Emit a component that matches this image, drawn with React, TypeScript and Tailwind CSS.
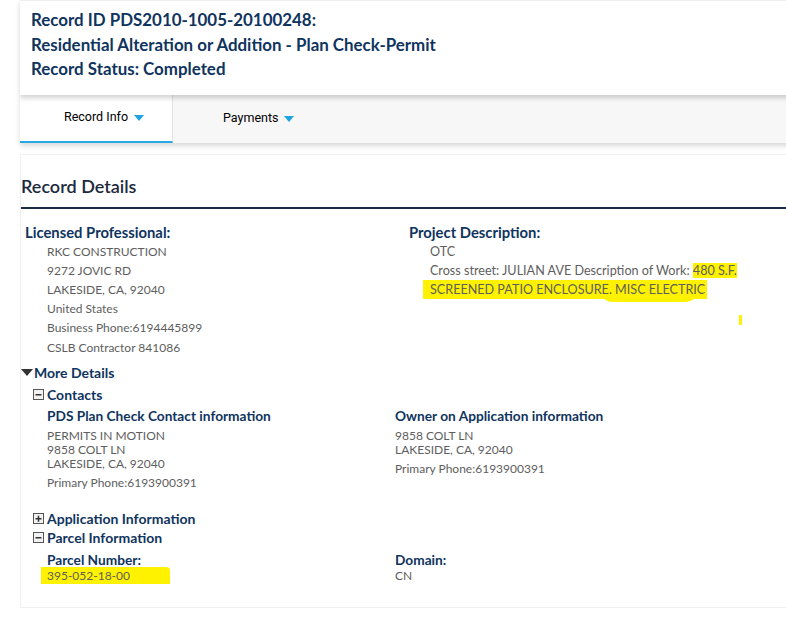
import React from 'react';

const navy = 'text-[#0f345e]';

function Caret() {
  return (
    <svg width="10" height="6" viewBox="0 0 10 6" className="inline-block ml-1.5">
      <path d="M0 0 H10 L5 6 Z" fill="#1fa3e3" />
    </svg>
  );
}

function BoxIcon({ plus }: { plus?: boolean }) {
  return (
    <svg width="11" height="11" viewBox="0 0 11 11" className="mr-[3px] shrink-0">
      <rect x="0.5" y="0.5" width="10" height="10" fill="#f2f2f2" stroke="#555" />
      <rect x="2.5" y="5" width="6" height="1.5" fill="#333" />
      {plus && <rect x="4.75" y="2.75" width="1.5" height="6" fill="#333" />}
    </svg>
  );
}

function Mark({ children }: { children: React.ReactNode }) {
  return <span className="bg-[#fff200]">{children}</span>;
}

export default function App() {
  return (
    <div className="w-[786px] h-[635px] overflow-hidden bg-white font-['Lato','Open_Sans',sans-serif]">
      <div className="pl-5 w-[806px]">
        {/* header */}
        <div className="bg-white border-t border-[#eee] shadow-[0_3px_5px_rgba(0,0,0,0.18)] relative z-10 pt-[7px] pb-[13px] pl-[11px]">
          <div className={`${navy} text-[16.9px] font-bold leading-[24.5px]`}>
            <div>Record ID PDS2010-1005-20100248:</div>
            <div>Residential Alteration or Addition - Plan Check-Permit</div>
            <div>Record Status: Completed</div>
          </div>
        </div>

        {/* tabs */}
        <div className="flex h-[48px] bg-[#f7f7f7] shadow-[0_3px_5px_rgba(0,0,0,0.15)]">
          <div className="w-[153px] bg-white border-b-2 border-[#29a8e6] border-r border-r-[#e2e2e2] flex items-center pl-[44px] text-[12.5px] text-black font-['Roboto',sans-serif]">
            Record Info
            <Caret />
          </div>
          <div className="pl-[50px] flex items-center text-[12.5px] text-black font-['Roboto',sans-serif]">
            Payments
            <Caret />
          </div>
        </div>

        {/* content card */}
        <div className="mt-[11px] border border-[#f0f0f0] h-[454px]">
          <h2 className="text-[18px] font-semibold text-[#1c2a3e] pt-[19px] pb-[9px] leading-[24px]">Record Details</h2>
          <div className="h-[2px] bg-[#1d2c45]" />

          <div className="grid grid-cols-[384px_1fr] pl-[4px] pt-[14px]">
            <div>
              <div className={`${navy} text-[14.8px] font-bold leading-[18px]`}>Licensed Professional:</div>
              <div className="pl-[22px] text-[12px] text-[#5e5e5e] leading-[19.2px] pt-[1px]">
                <div>RKC CONSTRUCTION</div>
                <div>9272 JOVIC RD</div>
                <div>LAKESIDE, CA, 92040</div>
                <div>United States</div>
                <div>Business Phone:6194445899</div>
                <div>CSLB Contractor 841086</div>
              </div>
            </div>
            <div className="relative">
              <div className={`${navy} text-[14.8px] font-bold leading-[18px]`}>Project Description:</div>
              <div className="pl-[21px] text-[12.6px] text-[#5e5e5e] leading-[19.2px] pt-[1px] pr-[30px]">
                <div>OTC</div>
                <div>
                  Cross street: JULIAN AVE Description of Work: <Mark>480 S.F.</Mark>
                </div>
                <div className="relative -ml-[7px] inline-block isolate">
                  <span className="absolute left-[176px] top-[5px] w-[100px] h-[17px] bg-[#fff200] rounded-b-[14px] -z-10" />
                  <span className="bg-[#fff200] pl-[7px] pr-[2px] py-[2px]">SCREENED PATIO ENCLOSURE. MISC ELECTRIC</span>
                </div>
              </div>
              <span className="absolute left-[330px] top-[92px] w-[3px] h-[10px] bg-[#fff200]" />
            </div>
          </div>

          {/* more details */}
          <div className="pt-[7px]">
            <div className={`flex items-center ${navy} text-[14px] font-bold leading-[18px]`}>
              <svg width="12" height="8" viewBox="0 0 12 8" className="mr-[1px]">
                <path d="M0 0 H12 L6 7 Z" fill="#333" />
              </svg>
              More Details
            </div>
            <div className="pl-[12px] pt-[4px]">
              <div className={`flex items-center ${navy} text-[14px] font-bold leading-[18px]`}>
                <BoxIcon />
                Contacts
              </div>
              <div className="grid grid-cols-[348px_1fr] pl-[14px] pt-[3px]">
                <div>
                  <div className={`${navy} text-[13.7px] font-bold leading-[17px]`}>PDS Plan Check Contact information</div>
                  <div className="text-[12px] text-[#5e5e5e] leading-[14px] pt-[5px]">
                    <div>PERMITS IN MOTION</div>
                    <div>9858 COLT LN</div>
                    <div>LAKESIDE, CA, 92040</div>
                    <div className="pt-[5px]">Primary Phone:6193900391</div>
                  </div>
                </div>
                <div>
                  <div className={`${navy} text-[13.7px] font-bold leading-[17px]`}>Owner on Application information</div>
                  <div className="text-[12px] text-[#5e5e5e] leading-[14px] pt-[5px]">
                    <div>9858 COLT LN</div>
                    <div>LAKESIDE, CA, 92040</div>
                    <div className="pt-[5px]">Primary Phone:6193900391</div>
                  </div>
                </div>
              </div>

              <div className={`flex items-center ${navy} text-[14px] font-bold leading-[18px] mt-[20px]`}>
                <BoxIcon plus />
                Application Information
              </div>
              <div className={`flex items-center ${navy} text-[14px] font-bold leading-[18px] mt-[1px]`}>
                <BoxIcon />
                Parcel Information
              </div>
              <div className="grid grid-cols-[348px_1fr] pl-[14px] pt-[4px]">
                <div>
                  <div className={`${navy} text-[13.7px] font-bold leading-[17px]`}>Parcel Number:</div>
                  <div className="text-[12px] text-[#5e5e5e] leading-[16px]">
                    <span className="bg-[#fff200] -ml-[6px] pl-[6px] pr-[40px] py-[1px] rounded-tr-[4px]">395-052-18-00</span>
                  </div>
                </div>
                <div>
                  <div className={`${navy} text-[13.7px] font-bold leading-[17px]`}>Domain:</div>
                  <div className="text-[12px] text-[#5e5e5e] leading-[16px]">CN</div>
                </div>
              </div>
            </div>
          </div>
        </div>
      </div>
    </div>
  );
}
